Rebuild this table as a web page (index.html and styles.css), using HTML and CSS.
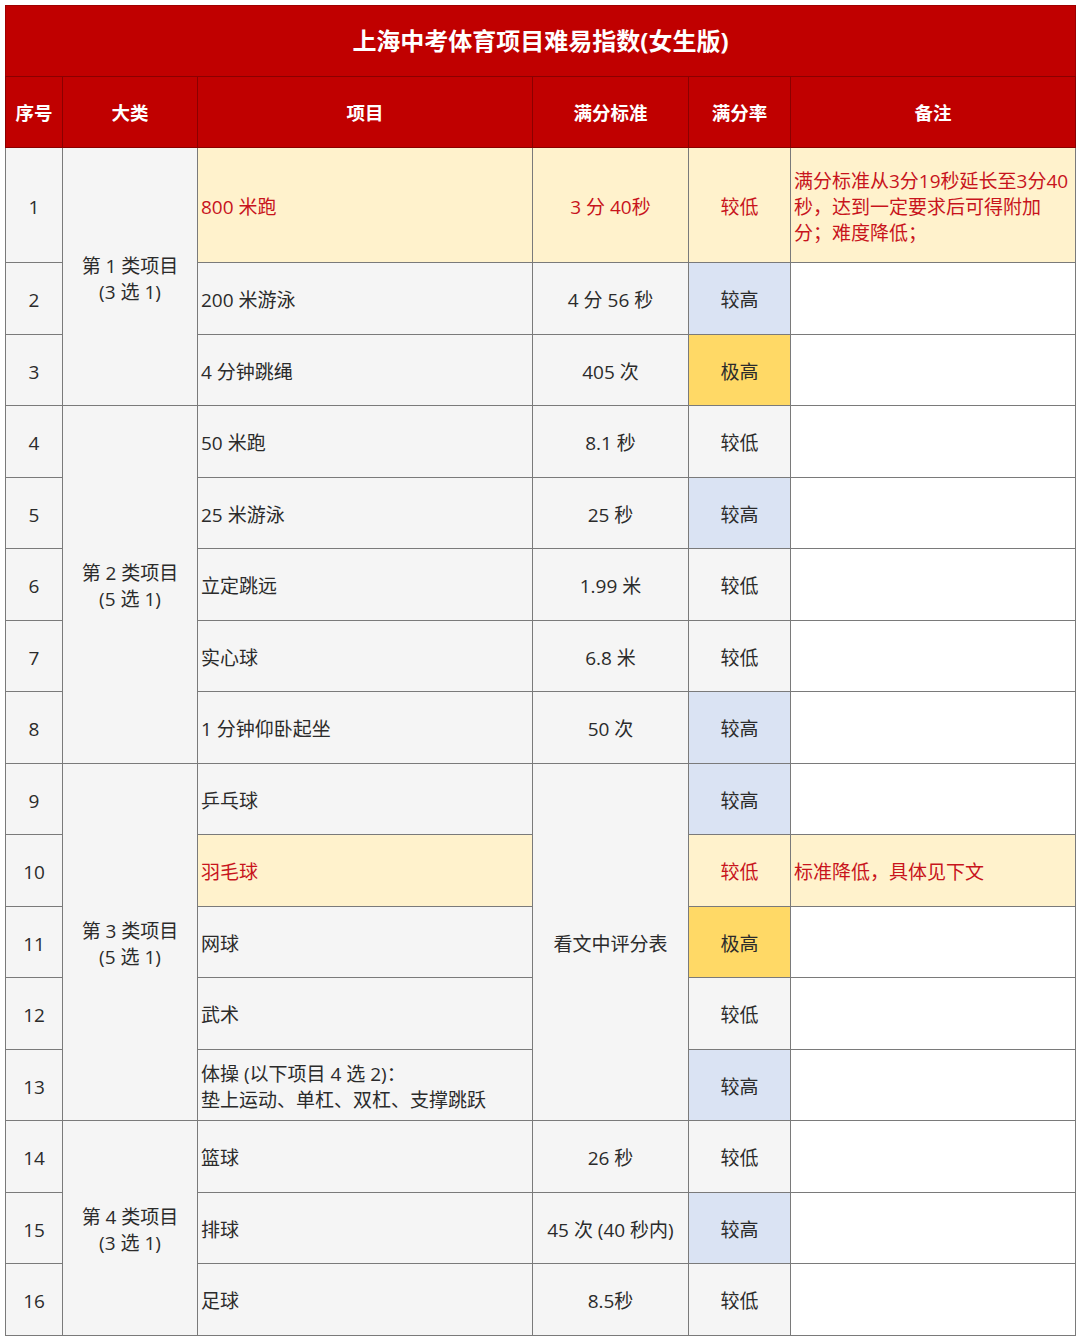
FILE: index.html
```html
<!DOCTYPE html>
<html lang="zh-CN">
<head>
<meta charset="utf-8">
<title>上海中考体育项目难易指数(女生版)</title>
<link rel="stylesheet" href="styles.css">
</head>
<body>
<table class="sheet">
  <colgroup>
    <col class="c-no"><col class="c-cat"><col class="c-item"><col class="c-std"><col class="c-rate"><col class="c-note">
  </colgroup>
  <thead>
    <tr class="title-row"><th colspan="6">上海中考体育项目难易指数(女生版)</th></tr>
    <tr class="head-row">
      <th>序号</th><th>大类</th><th>项目</th><th>满分标准</th><th>满分率</th><th>备注</th>
    </tr>
  </thead>
  <tbody>
    <tr class="r-tall">
      <td class="no">1</td>
      <td class="cat" rowspan="3">第 1 类项目<br>(3 选 1)</td>
      <td class="item hl red">800 米跑</td>
      <td class="std hl red">3 分 40秒</td>
      <td class="rate hl red">较低</td>
      <td class="note hl red">满分标准从3分19秒延长至3分40<br>秒，达到一定要求后可得附加<br>分；难度降低；</td>
    </tr>
    <tr>
      <td class="no">2</td>
      <td class="item">200 米游泳</td>
      <td class="std">4 分 56 秒</td>
      <td class="rate high">较高</td>
      <td class="note"></td>
    </tr>
    <tr>
      <td class="no">3</td>
      <td class="item">4 分钟跳绳</td>
      <td class="std">405 次</td>
      <td class="rate top">极高</td>
      <td class="note"></td>
    </tr>
    <tr>
      <td class="no">4</td>
      <td class="cat" rowspan="5">第 2 类项目<br>(5 选 1)</td>
      <td class="item">50 米跑</td>
      <td class="std">8.1 秒</td>
      <td class="rate">较低</td>
      <td class="note"></td>
    </tr>
    <tr>
      <td class="no">5</td>
      <td class="item">25 米游泳</td>
      <td class="std">25 秒</td>
      <td class="rate high">较高</td>
      <td class="note"></td>
    </tr>
    <tr>
      <td class="no">6</td>
      <td class="item">立定跳远</td>
      <td class="std">1.99 米</td>
      <td class="rate">较低</td>
      <td class="note"></td>
    </tr>
    <tr>
      <td class="no">7</td>
      <td class="item">实心球</td>
      <td class="std">6.8 米</td>
      <td class="rate">较低</td>
      <td class="note"></td>
    </tr>
    <tr>
      <td class="no">8</td>
      <td class="item">1 分钟仰卧起坐</td>
      <td class="std">50 次</td>
      <td class="rate high">较高</td>
      <td class="note"></td>
    </tr>
    <tr>
      <td class="no">9</td>
      <td class="cat" rowspan="5">第 3 类项目<br>(5 选 1)</td>
      <td class="item">乒乓球</td>
      <td class="std" rowspan="5">看文中评分表</td>
      <td class="rate high">较高</td>
      <td class="note"></td>
    </tr>
    <tr>
      <td class="no">10</td>
      <td class="item hl red">羽毛球</td>
      <td class="rate hl red">较低</td>
      <td class="note hl red">标准降低，具体见下文</td>
    </tr>
    <tr>
      <td class="no">11</td>
      <td class="item">网球</td>
      <td class="rate top">极高</td>
      <td class="note"></td>
    </tr>
    <tr>
      <td class="no">12</td>
      <td class="item">武术</td>
      <td class="rate">较低</td>
      <td class="note"></td>
    </tr>
    <tr>
      <td class="no">13</td>
      <td class="item">体操 (以下项目 4 选 2)：<br>垫上运动、单杠、双杠、支撑跳跃</td>
      <td class="rate high">较高</td>
      <td class="note"></td>
    </tr>
    <tr>
      <td class="no">14</td>
      <td class="cat" rowspan="3">第 4 类项目<br>(3 选 1)</td>
      <td class="item">篮球</td>
      <td class="std">26 秒</td>
      <td class="rate">较低</td>
      <td class="note"></td>
    </tr>
    <tr>
      <td class="no">15</td>
      <td class="item">排球</td>
      <td class="std">45 次 (40 秒内)</td>
      <td class="rate high">较高</td>
      <td class="note"></td>
    </tr>
    <tr>
      <td class="no">16</td>
      <td class="item">足球</td>
      <td class="std">8.5秒</td>
      <td class="rate">较低</td>
      <td class="note"></td>
    </tr>
  </tbody>
</table>
</body>
</html>
```
FILE: styles.css
```css
html, body {
  margin: 0;
  padding: 0;
  background: #ffffff;
}

body {
  padding: 5px;
  font-family: "Open Sans", "Noto Sans CJK SC", sans-serif;
  color: #2b2b2b;
}

.sheet {
  width: 1070px;
  table-layout: fixed;
  border-collapse: collapse;
  font-size: 19px;
}

.c-no { width: 57px; }
.c-cat { width: 135px; }
.c-item { width: 335px; }
.c-std { width: 156px; }
.c-rate { width: 102px; }
.c-note { width: 285px; }

.title-row th {
  height: 66px;
  padding: 0 0 4px;
  background: #c00000;
  color: #ffffff;
  font-size: 24px;
  font-weight: 700;
  text-align: center;
  border: 1px solid #a00000;
  border-bottom: 1px solid #8a0000;
}

.head-row th {
  height: 69px;
  padding: 0 0 1px;
  background: #c00000;
  color: #ffffff;
  font-size: 18.5px;
  font-weight: 700;
  text-align: center;
  border: 1px solid #8a0000;
}

.sheet td {
  height: 66.5px;
  padding: 4px 3px 0;
  border: 1px solid #7a7a7a;
  background: #f5f5f5;
  line-height: 26px;
  text-align: center;
  vertical-align: middle;
  white-space: nowrap;
}

.sheet tr.r-tall td {
  height: 110px;
}

.sheet td.item,
.sheet td.note {
  text-align: left;
}

.sheet td.note {
  background: #ffffff;
}

.sheet td.high {
  background: #dae3f3;
}

.sheet td.top {
  background: #ffd966;
}

.sheet td.hl {
  background: #fff2cc;
}

.sheet td.red {
  color: #c8141c;
}
```
